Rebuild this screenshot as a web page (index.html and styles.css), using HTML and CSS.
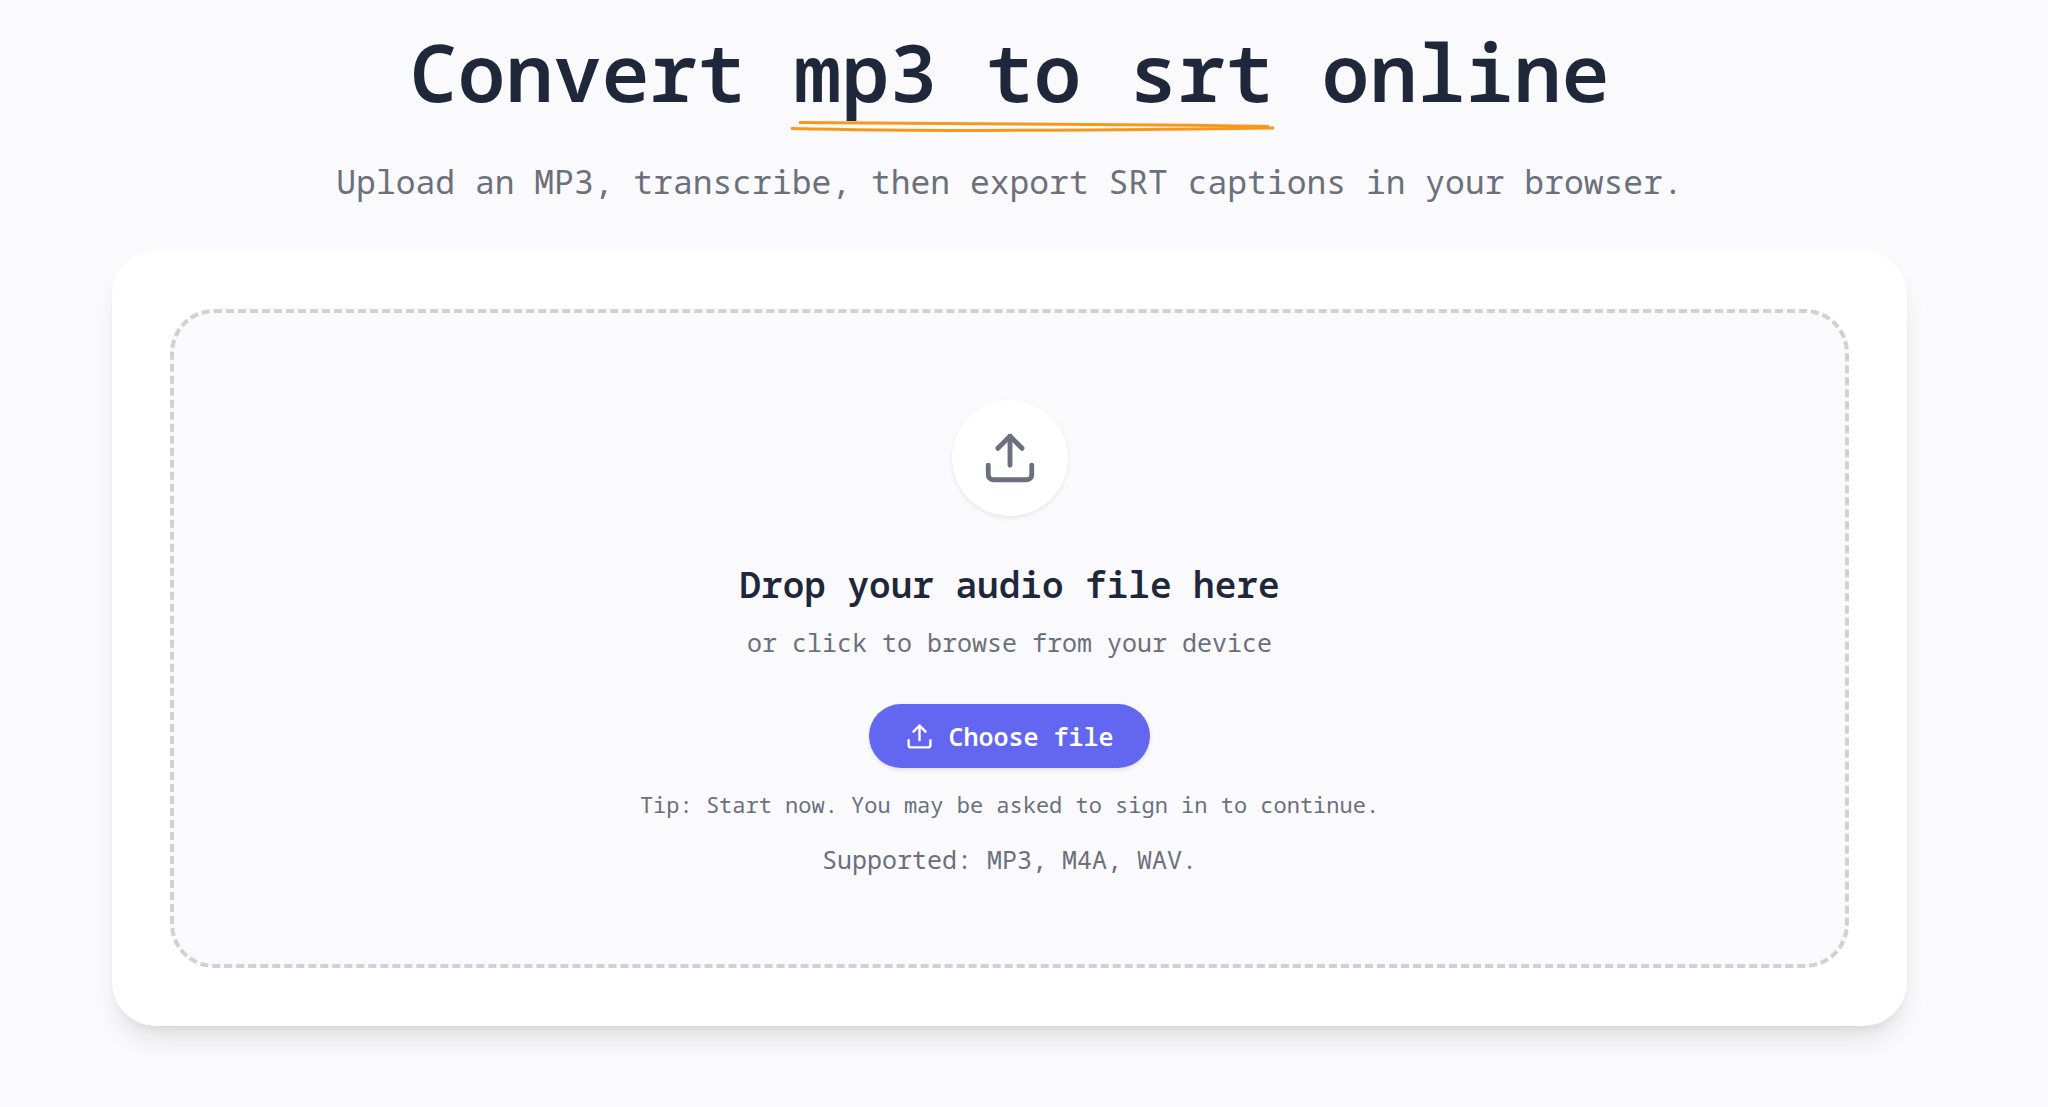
FILE: index.html
```html
<!DOCTYPE html>
<html lang="en">
<head>
  <meta charset="utf-8">
  <meta name="viewport" content="width=device-width, initial-scale=1">
  <title>Convert mp3 to srt online</title>
  <link rel="stylesheet" href="styles.css">
</head>
<body>
  <main class="page">
    <header class="hero">
      <h1 class="hero-title">Convert <span class="marked">mp3 to srt<svg class="scribble" viewBox="0 0 484 12" preserveAspectRatio="none" aria-hidden="true"><path d="M5 2.5C160 2.5 320 4 479 6.5"/><path d="M-3 8.5C150 12 320 10 484 8"/></svg></span> online</h1>
      <p class="hero-text">Upload an MP3, transcribe, then export SRT captions in your browser.</p>
    </header>

    <section class="card">
      <div class="dropzone">
        <div class="badge">
          <svg class="icon icon-large" viewBox="0 0 24 24" aria-hidden="true"><path d="M21 15v4a2 2 0 0 1-2 2H5a2 2 0 0 1-2-2v-4"/><path d="M17 8l-5-5-5 5"/><path d="M12 3v12"/></svg>
        </div>
        <h2 class="drop-title">Drop your audio file here</h2>
        <p class="drop-text">or click to browse from your device</p>
        <button class="choose" type="button">
          <svg class="icon icon-small" viewBox="0 0 24 24" aria-hidden="true"><path d="M21 15v4a2 2 0 0 1-2 2H5a2 2 0 0 1-2-2v-4"/><path d="M17 8l-5-5-5 5"/><path d="M12 3v12"/></svg>
          <span>Choose file</span>
        </button>
        <p class="tip">Tip: Start now. You may be asked to sign in to continue.</p>
        <p class="formats">Supported: MP3, M4A, WAV.</p>
      </div>
    </section>
  </main>
</body>
</html>
```
FILE: styles.css
```css
* {
  box-sizing: border-box;
}

body {
  margin: 0;
  background: #fafafc;
  color: #1f273b;
  font-family: "Noto Sans Mono", "DejaVu Sans Mono", "Liberation Mono", monospace;
}

h1, h2, p {
  margin: 0;
}

.page {
  padding: 27px 141px 80px 112px;
}

.hero {
  text-align: center;
  margin-bottom: 44px;
}

.hero-title {
  font-size: 80px;
  line-height: 88px;
  font-weight: 600;
  margin-bottom: 42px;
}

.marked {
  position: relative;
  display: inline-block;
}

.scribble {
  position: absolute;
  left: 0;
  bottom: -17px;
  width: 100%;
  height: 12px;
  overflow: visible;
  fill: none;
  stroke: #f7981d;
  stroke-width: 3;
}

.hero-text {
  font-size: 33px;
  line-height: 50px;
  color: #6b707c;
}

.card {
  padding: 58px;
  border-radius: 44px;
  background: #fff;
  box-shadow: 0 18px 27px -6px rgba(0, 0, 0, 0.1), 0 7px 11px -7px rgba(0, 0, 0, 0.1);
}

.dropzone {
  display: flex;
  flex-direction: column;
  align-items: center;
  padding: 87px 40px;
  border: 4px dashed #d1d1d4;
  border-radius: 44px;
  background: #fafafc;
  text-align: center;
}

.badge {
  display: grid;
  place-items: center;
  width: 116px;
  height: 116px;
  margin-bottom: 44px;
  border-radius: 50%;
  background: #fff;
  box-shadow: 0 2px 4px rgba(0, 0, 0, 0.08);
}

.icon {
  fill: none;
  stroke: currentColor;
  stroke-width: 2;
  stroke-linecap: round;
  stroke-linejoin: round;
}

.icon-large {
  width: 58px;
  height: 58px;
  color: #6b707c;
}

.icon-small {
  width: 29px;
  height: 29px;
}

.drop-title {
  font-size: 36px;
  line-height: 50px;
  font-weight: 600;
  margin-bottom: 14px;
}

.drop-text,
.formats {
  font-size: 25px;
  line-height: 36px;
  color: #6b707c;
}

.drop-text {
  margin-bottom: 44px;
}

.choose {
  display: flex;
  align-items: center;
  gap: 14px;
  padding: 14px 36px;
  margin-bottom: 21px;
  border: 0;
  border-radius: 33px;
  background: #6366f1;
  color: #fff;
  font: inherit;
  font-size: 25px;
  line-height: 36px;
  font-weight: 600;
  box-shadow: 0 2px 4px rgba(0, 0, 0, 0.1);
  cursor: pointer;
}

.tip {
  font-size: 22px;
  line-height: 30px;
  color: #6b707c;
  margin-bottom: 22px;
}
```
